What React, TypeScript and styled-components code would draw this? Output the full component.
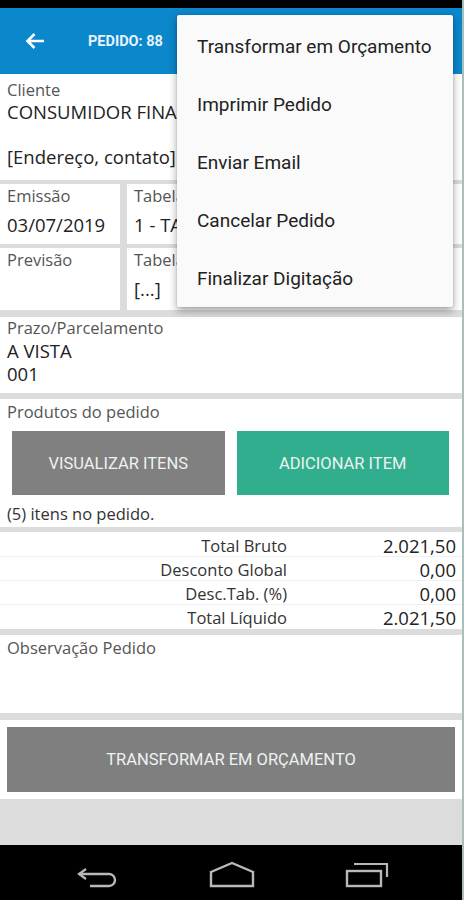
import React from "react";
import styled, { createGlobalStyle } from "styled-components";

const GlobalStyle = createGlobalStyle`
  html, body {
    margin: 0;
    padding: 0;
    background: #a7c0bc;
  }
  * {
    box-sizing: border-box;
  }
`;

const Screen = styled.div`
  position: relative;
  width: 462px;
  height: 900px;
  display: flex;
  flex-direction: column;
  background: #dcdcdc;
  font-family: "Open Sans", "Noto Sans", sans-serif;
  overflow: hidden;
`;

const StatusBar = styled.div`
  height: 8px;
  background: #000;
  flex-shrink: 0;
`;

const AppBar = styled.div`
  height: 66px;
  flex-shrink: 0;
  background: #0b87cc;
  display: flex;
  align-items: center;
  padding-left: 24px;
  gap: 42px;
`;

const BackButton = styled.div`
  width: 22px;
  height: 22px;
  display: flex;
  align-items: center;
  justify-content: center;
`;

const Title = styled.div`
  font-family: Roboto, "Liberation Sans", sans-serif;
  font-weight: 700;
  font-size: 14.5px;
  color: #e8f3fa;
`;

const Content = styled.div`
  display: flex;
  flex-direction: column;
  flex: 1;
`;

const Section = styled.div<{ $pt?: number; $pb?: number; $px?: number; $h?: number; $mb?: number }>`
  background: #fff;
  padding: ${(p) => p.$pt ?? 4}px ${(p) => p.$px ?? 7}px ${(p) => p.$pb ?? 4}px;
  height: ${(p) => (p.$h ? `${p.$h}px` : "auto")};
  margin-bottom: ${(p) => p.$mb ?? 5}px;
`;

const Label = styled.div<{ $pl?: number }>`
  font-size: 16.5px;
  line-height: 22px;
  color: #555;
  padding-left: ${(p) => p.$pl ?? 0}px;
`;

const Value = styled.div<{ $lh?: number }>`
  font-size: 18.5px;
  line-height: ${(p) => p.$lh ?? 23}px;
  color: #222;
  white-space: pre;
`;

const Grid = styled.div`
  display: grid;
  grid-template-columns: 120px 1fr;
  grid-template-rows: 60px 62px;
  column-gap: 7px;
  row-gap: 4px;
  margin-bottom: 7px;
`;

const Cell = styled.div`
  background: #fff;
  padding: 1px 4px 0 7px;
  display: flex;
  flex-direction: column;
  gap: 6px;
  overflow: hidden;
`;

const ButtonRow = styled.div`
  display: grid;
  grid-template-columns: 1fr 1fr;
  gap: 12px;
  padding: 8px 13px 0 12px;
`;

const ActionButton = styled.div<{ $color: string; $h?: number }>`
  height: ${(p) => p.$h ?? 64}px;
  background: ${(p) => p.$color};
  display: flex;
  align-items: center;
  justify-content: center;
  font-family: Roboto, "Liberation Sans", sans-serif;
  font-size: 16.5px;
  color: #eef2f0;
`;

const ItemsNote = styled.div`
  font-size: 16.5px;
  line-height: 22px;
  color: #333;
  padding: 8px 0 0 7px;
`;

const TotalsTable = styled.div`
  background: #fff;
  margin-bottom: 6px;
  padding: 1px 0 0;
`;

const TotalRow = styled.div`
  display: grid;
  grid-template-columns: 290px 1fr;
  height: 24px;
  align-items: center;
  border-bottom: 1px solid #f0f0f0;
  &:last-child {
    border-bottom: none;
  }
`;

const TotalLabel = styled.div`
  text-align: right;
  font-size: 16.5px;
  color: #333;
  padding-right: 3px;
`;

const TotalValue = styled.div`
  text-align: right;
  font-size: 18.5px;
  color: #222;
  padding-right: 6px;
`;

const BottomBand = styled.div`
  background: #fff;
  padding: 7px;
  margin-top: 1px;
`;

const NavBar = styled.div`
  height: 55px;
  background: #000;
  display: flex;
  align-items: center;
  justify-content: center;
  gap: 88px;
  padding: 4px 0 0 3px;
  flex-shrink: 0;
`;

const Menu = styled.div`
  position: absolute;
  top: 15px;
  left: 177px;
  width: 276px;
  padding-top: 2px;
  background: #fafafa;
  box-shadow: 0 4px 8px rgba(0, 0, 0, 0.35), 0 0 2px rgba(0, 0, 0, 0.2);
  border-radius: 2px;
`;

const MenuItem = styled.div`
  height: 58px;
  display: flex;
  align-items: center;
  padding-left: 20px;
  font-family: Roboto, "Liberation Sans", sans-serif;
  font-size: 19px;
  color: #222;
`;

const menuItems = [
  "Transformar em Orçamento",
  "Imprimir Pedido",
  "Enviar Email",
  "Cancelar Pedido",
  "Finalizar Digitação",
];

const totals = [
  ["Total Bruto", "2.021,50"],
  ["Desconto Global", "0,00"],
  ["Desc.Tab. (%)", "0,00"],
  ["Total Líquido", "2.021,50"],
];

const NavIcon = ({ kind }: { kind: "back" | "home" | "recent" }) => {
  const stroke = "#b8b8b8";
  if (kind === "back")
    return (
      <svg width="44" height="30" viewBox="0 0 44 30">
        <path d="M10 9 L3 14 L10 19" fill="none" stroke={stroke} strokeWidth="2.2" />
        <path d="M3 14 H33 a6 6 0 0 1 0 12 H14" fill="none" stroke={stroke} strokeWidth="2.4" />
      </svg>
    );
  if (kind === "home")
    return (
      <svg width="48" height="30" viewBox="0 0 48 30">
        <path d="M3 26 V12 L24 3 L45 12 V26 Z" fill="none" stroke={stroke} strokeWidth="2.4" />
      </svg>
    );
  return (
    <svg width="46" height="30" viewBox="0 0 46 30">
      <path d="M10 4 H43 V17" fill="none" stroke={stroke} strokeWidth="2.2" />
      <rect x="3" y="11" width="34" height="15" fill="none" stroke={stroke} strokeWidth="2.4" />
    </svg>
  );
};

const App = () => {
  return (
    <>
      <GlobalStyle />
      <Screen>
        <StatusBar />
        <AppBar>
          <BackButton>
            <svg width="20" height="18" viewBox="0 0 20 18">
              <path d="M19 9 H3 M9.5 2 L2.5 9 L9.5 16" fill="none" stroke="#fff" strokeWidth="2.6" />
            </svg>
          </BackButton>
          <Title>PEDIDO: 88</Title>
        </AppBar>
        <Content>
          <Section $pt={5} $h={106} $mb={4}>
            <Label>Cliente</Label>
            <Value $lh={22.5}>{"CONSUMIDOR FINAL\n\n[Endereço, contato]"}</Value>
          </Section>
          <Grid>
            <Cell>
              <Label>Emissão</Label>
              <Value>03/07/2019</Value>
            </Cell>
            <Cell>
              <Label>Tabela</Label>
              <Value>1 - TABELA</Value>
            </Cell>
            <Cell>
              <Label>Previsão</Label>
            </Cell>
            <Cell>
              <Label>Tabela</Label>
              <Value>[...]</Value>
            </Cell>
          </Grid>
          <Section $pt={0} $h={76} $mb={6}>
            <Label>Prazo/Parcelamento</Label>
            <Value>A VISTA</Value>
            <Value>001</Value>
          </Section>
          <Section $pt={2} $pb={0} $px={0} $h={128} $mb={5}>
            <Label $pl={7}>Produtos do pedido</Label>
            <ButtonRow>
              <ActionButton $color="#808080">VISUALIZAR ITENS</ActionButton>
              <ActionButton $color="#30ae8e">ADICIONAR ITEM</ActionButton>
            </ButtonRow>
            <ItemsNote>(5) itens no pedido.</ItemsNote>
          </Section>
          <TotalsTable>
            {totals.map(([label, value]) => (
              <TotalRow key={label}>
                <TotalLabel>{label}</TotalLabel>
                <TotalValue>{value}</TotalValue>
              </TotalRow>
            ))}
          </TotalsTable>
          <Section $pt={2} $h={78} $mb={6}>
            <Label>Observação Pedido</Label>
          </Section>
          <BottomBand>
            <ActionButton $color="#7f7f7f" $h={65}>
              TRANSFORMAR EM ORÇAMENTO
            </ActionButton>
          </BottomBand>
        </Content>
        <NavBar>
          <NavIcon kind="back" />
          <NavIcon kind="home" />
          <NavIcon kind="recent" />
        </NavBar>
        <Menu>
          {menuItems.map((item) => (
            <MenuItem key={item}>{item}</MenuItem>
          ))}
        </Menu>
      </Screen>
    </>
  );
};

export default App;
